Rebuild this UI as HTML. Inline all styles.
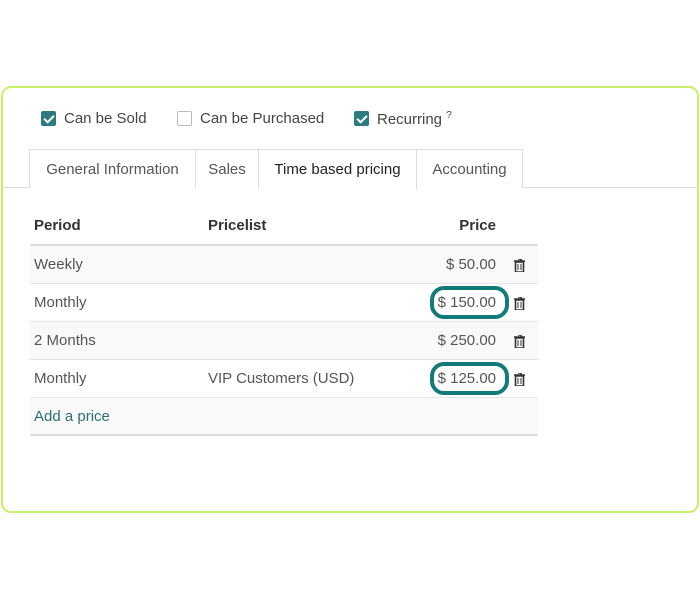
<!DOCTYPE html>
<html><head><style>
*{margin:0;padding:0;box-sizing:border-box}
body{width:700px;height:600px;background:#fff;font-family:"Liberation Sans",sans-serif;position:relative;overflow:hidden;color:#444}
.card{position:absolute;left:1px;top:86px;width:698px;height:427px;border:2px solid #c9f06b;border-radius:10px;background:#fff}
.abs{position:absolute}
.cb{position:absolute;width:15px;height:15px;border-radius:2px}
.cb.on{background:#2d7a80}
.cb.on:after{content:"";position:absolute;left:5px;top:2px;width:4px;height:8px;border:solid #fff;border-width:0 2px 2px 0;transform:rotate(45deg)}
.cb.off{border:1px solid #bbb;background:#fff}
.lbl{position:absolute;font-size:15px;color:#444}
.tab{position:absolute;top:149px;height:39px;border:1px solid #ddd;border-bottom:none;font-size:15px;color:#555;text-align:center;line-height:40px;background:#fff}
.row{position:absolute;left:30px;width:508px;height:38px;border-bottom:1px solid #e4e4e4;font-size:15px;line-height:38px;color:#555}
.row.g{background:#f9f9f9}
.row span{position:absolute}
.pr{right:42px}
.trash{position:absolute;right:13px;top:13px;width:11px;height:13px}
.ov{position:absolute;border:4px solid #137a7a;border-radius:14px}
</style></head><body>
<div class="card"></div>
<div class="cb on" style="left:41px;top:111px"></div><div class="lbl" style="left:64px;top:110px">Can be Sold</div>
<div class="cb off" style="left:177px;top:111px"></div><div class="lbl" style="left:200px;top:110px">Can be Purchased</div>
<div class="cb on" style="left:354px;top:111px"></div><div class="lbl" style="left:377px;top:110px">Recurring <sup style="font-size:10px">?</sup></div>
<div class="abs" style="left:3px;top:187px;width:694px;height:1px;background:#ddd"></div>
<div class="tab" style="left:29px;width:167px;color:#555">General Information</div>
<div class="tab" style="left:195px;width:64px">Sales</div>
<div class="tab" style="left:258px;width:159px;color:#222;height:40px">Time based pricing</div>
<div class="tab" style="left:416px;width:107px">Accounting</div>
<div class="row" style="top:207px;font-weight:bold;color:#333;border-bottom:2px solid #ddd;height:39px"><span style="left:4px">Period</span><span style="left:178px">Pricelist</span><span style="right:42px">Price</span></div>
<div class="row g" style="top:246px"><span style="left:4px">Weekly</span><span class="pr">$ 50.00</span><svg class="trash" viewBox="0 0 11 13"><path d="M0 2h11M4 0h3v2M1.5 3h8v10h-8z" fill="none" stroke="#333" stroke-width="1.6"/><path d="M4 5v6M7 5v6" stroke="#333"/></svg></div>
<div class="row" style="top:284px"><span style="left:4px">Monthly</span><span class="pr">$ 150.00</span><svg class="trash" viewBox="0 0 11 13"><path d="M0 2h11M4 0h3v2M1.5 3h8v10h-8z" fill="none" stroke="#333" stroke-width="1.6"/><path d="M4 5v6M7 5v6" stroke="#333"/></svg></div>
<div class="row g" style="top:322px"><span style="left:4px">2 Months</span><span class="pr">$ 250.00</span><svg class="trash" viewBox="0 0 11 13"><path d="M0 2h11M4 0h3v2M1.5 3h8v10h-8z" fill="none" stroke="#333" stroke-width="1.6"/><path d="M4 5v6M7 5v6" stroke="#333"/></svg></div>
<div class="row" style="top:360px"><span style="left:4px">Monthly</span><span style="left:178px">VIP Customers (USD)</span><span class="pr">$ 125.00</span><svg class="trash" viewBox="0 0 11 13"><path d="M0 2h11M4 0h3v2M1.5 3h8v10h-8z" fill="none" stroke="#333" stroke-width="1.6"/><path d="M4 5v6M7 5v6" stroke="#333"/></svg></div>
<div class="row g" style="top:398px;border-bottom:2px solid #ddd"><span style="left:4px;color:#2b6f75">Add a price</span></div>
<div class="ov" style="left:430px;top:286px;width:79px;height:33px"></div>
<div class="ov" style="left:430px;top:362px;width:79px;height:33px"></div>
</body></html>
